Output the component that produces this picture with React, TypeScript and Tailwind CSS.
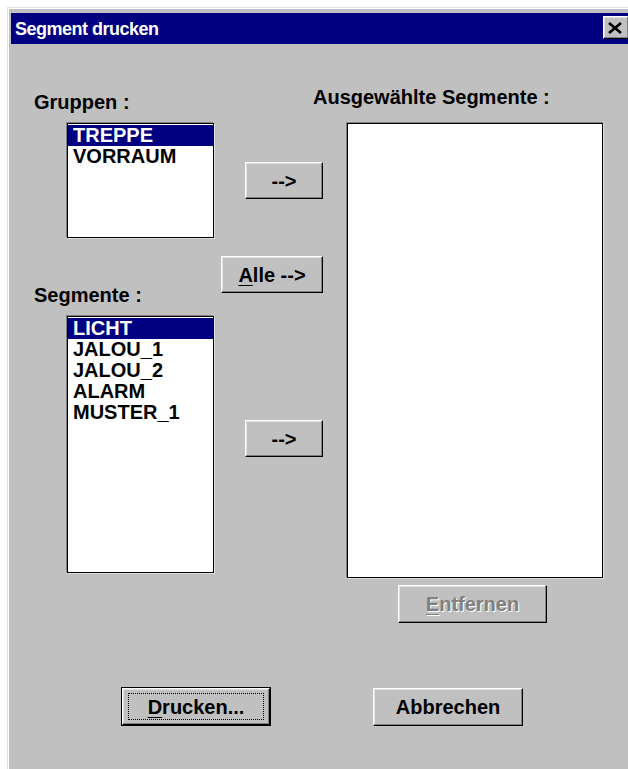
import type { ReactNode } from 'react';
import clsx from 'clsx';

/** Raised Win95 bevel: white/light top-left, black/dark bottom-right. */
const RAISED =
  'flex items-center justify-center border border-t-white border-l-white border-r-black border-b-black bg-[#c0c0c0] shadow-[inset_-1px_-1px_#808080,inset_1px_1px_#dfdfdf]';

function Key({ children }: { children: ReactNode }) {
  return <span className="underline decoration-1 underline-offset-[3px]">{children}</span>;
}

function Button({
  children,
  className,
  disabled,
}: {
  children: ReactNode;
  className?: string;
  disabled?: boolean;
}) {
  return (
    <div
      className={clsx(
        RAISED,
        disabled && 'text-[#808080] [text-shadow:1px_1px_0_#fff]',
        className,
      )}
    >
      {children}
    </div>
  );
}

function ListBox({
  items,
  selected,
  className,
}: {
  items: string[];
  selected?: number;
  className?: string;
}) {
  return (
    <div
      className={clsx(
        'border border-black bg-white pt-[1px] shadow-[-1px_-1px_0_#808080,1px_1px_0_#dfdfdf]',
        className,
      )}
    >
      {items.map((item, i) => (
        <div
          key={item}
          className={clsx(
            'h-[21px] pl-[5px] leading-[21px]',
            i === selected && 'bg-[#000080] text-white',
          )}
        >
          {item}
        </div>
      ))}
    </div>
  );
}

function CloseBox() {
  return (
    <div className={clsx(RAISED, 'ml-auto mt-[3px] h-[23px] w-[26px] self-start')}>
      <svg width="16" height="12" viewBox="0 0 16 12" className="mr-[2px]">
        <path d="M2 1 L14 11 M14 1 L2 11" stroke="#000" strokeWidth="2.6" />
      </svg>
    </div>
  );
}

export default function App() {
  return (
    <div className="h-screen w-screen overflow-hidden bg-white pl-[7px] pt-[7px] font-['Liberation_Sans',Arial,sans-serif] text-[20px] font-bold leading-[22px] text-black">
      <div className="h-[800px] w-[640px] border-l border-t border-[#dfdfdf]">
        <div className="h-full border-l border-t border-white bg-[#c0c0c0] pl-[2px] pt-[4px]">
          {/* title bar */}
          <div className="flex h-[31px] w-[620px] items-center bg-[#000080] pl-[4px] pr-[2px]">
            <span className="text-[18px] tracking-[-0.5px] text-white">Segment drucken</span>
            <CloseBox />
          </div>

          <div className="flex items-start pl-[23px]">
            {/* left: source lists */}
            <div className="flex w-[180px] flex-col">
              <div className="mt-[47px]">Gruppen :</div>
              <ListBox
                items={['TREPPE', 'VORRAUM']}
                selected={0}
                className="ml-[33px] mt-[10px] h-[115px] w-[147px]"
              />
              <div className="mt-[46px]">Segmente :</div>
              <ListBox
                items={['LICHT', 'JALOU_1', 'JALOU_2', 'ALARM', 'MUSTER_1']}
                selected={0}
                className="ml-[33px] mt-[10px] h-[257px] w-[147px]"
              />
            </div>

            {/* middle: move buttons */}
            <div className="ml-[7px] flex w-[102px] flex-col items-end">
              <Button className="mt-[118px] h-[37px] w-[78px]">--&gt;</Button>
              <Button className="mt-[57px] h-[37px] w-[102px]">
                <Key>A</Key>lle --&gt;
              </Button>
              <Button className="mt-[127px] h-[37px] w-[78px]">--&gt;</Button>
            </div>

            {/* right: chosen segments */}
            <div className="ml-[24px] flex w-[256px] flex-col">
              <div className="-ml-[34px] mt-[42px] whitespace-nowrap">Ausgewählte Segmente :</div>
              <ListBox items={[]} className="mt-[15px] h-[455px] w-[256px]" />
              <Button disabled className="ml-[51px] mt-[7px] h-[38px] w-[149px]">
                <Key>E</Key>ntfernen
              </Button>
            </div>
          </div>

          {/* dialog buttons */}
          <div className="mt-[64px] flex items-start pl-[110px]">
            <div className="border border-black">
              <Button className="h-[37px] w-[148px]">
                <div className="flex h-[27px] w-[136px] items-center justify-center border border-dotted border-black">
                  <Key>D</Key>rucken...
                </div>
              </Button>
            </div>
            <Button className="ml-[102px] mt-[1px] h-[38px] w-[150px]">Abbrechen</Button>
          </div>
        </div>
      </div>
    </div>
  );
}
